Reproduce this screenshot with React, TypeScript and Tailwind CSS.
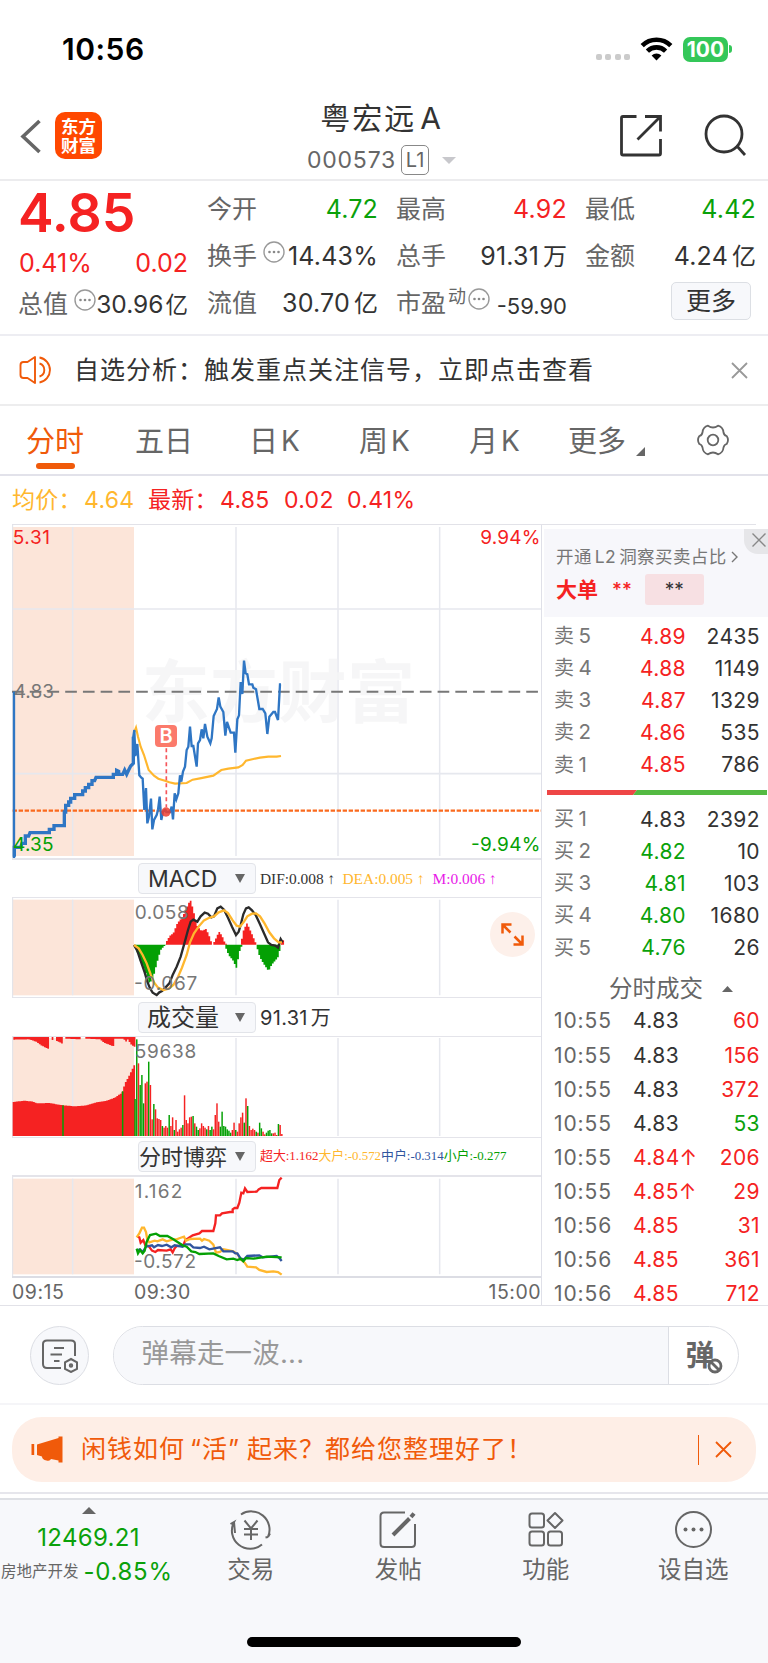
import React from 'react';
import clsx from 'clsx';

type Tone = 'red' | 'green' | 'ink';

const TONES: Record<Tone, string> = {
  red: 'text-[#f52222]',
  green: 'text-[#0aa10a]',
  ink: 'text-[#333]',
};

const RED = '#f52222';
const GREEN = '#04a004';
const AMBER = '#ffb72e';
const GRID = '#e6e8ee';
const CHART_FONT = 'Inter, "Noto Sans CJK SC", sans-serif';

type Point = [number, number];

// Linear interpolation along a list of points sorted by x
function sample(points: Point[], x: number) {
  for (let i = 1; i < points.length; i++) {
    const [x0, y0] = points[i - 1];
    const [x1, y1] = points[i];
    if (x <= x1) return y0 + ((y1 - y0) * (x - x0)) / (x1 - x0);
  }
  return points[points.length - 1][1];
}

function barsPath(points: Point[], base: number, step = 5.1) {
  const from = points[0][0];
  const to = points[points.length - 1][0];
  let d = '';
  for (let x = from; x < to; x += step) {
    const y = sample(points, x + step / 2).toFixed(1);
    d += `M${x.toFixed(1)} ${base}V${y}H${(x + step).toFixed(1)}V${base}Z`;
  }
  return d;
}

const AUCTION_LINE =
  'M43 1040V1012H62L66 1000H76V978H86L90 968H148V958H162V947H193V906H197V886H206V876H212V865H224V854H248V843H256V833H266V823H276V812H284L288 802H340V793H350V781L356 784V793H368L374 780L380 793L386 780L392 768L400 760V680';

const PRICE_LINE =
  'M400 760V680L403 660L406 738L412 702L418 796L424 803L428 806L433 900L438 834L442 940L447 920L453 866L457 958L462 930L470 915L474 900L479 860L484 930L489 905L495 900L499 906H510L515 890L519 928L524 850L529 868L535 850L540 796L544 815L549 785L555 770L560 720L565 710L570 650L575 708H580L590 770L594 700L600 690L605 658L610 685L615 642L622 680L631 700L635 685L641 618L651 597L656 562L661 590L670 606L676 677L681 636L692 668H702L706 728L712 628L717 616L722 516L727 552L732 452L737 490L742 493L747 523H757L760 533L768 538L778 597H788L796 610L802 672L808 620L820 606H825L834 630L840 523H843';

const AVG_LINE =
  'M402 668L408 653L414 680L422 710L432 735L446 780L462 797L475 806L495 812L508 817L525 821L560 819L578 809L600 805L640 797L664 780L685 776L715 772L728 765L738 752L760 747L780 743L805 740L830 740L843 738';

const MACD_BARS: { color: string; points: Point[] }[] = [
  { color: GREEN, points: [[404, 272], [415, 300], [425, 325], [436, 350], [446, 383], [455, 378], [464, 352], [472, 320], [482, 285], [496, 270]] },
  { color: RED, points: [[498, 262], [510, 242], [520, 235], [532, 205], [548, 185], [560, 158], [571, 134], [580, 165], [590, 210], [604, 228], [618, 222], [626, 238], [635, 264]] },
  { color: RED, points: [[640, 266], [648, 250], [657, 230], [666, 242], [676, 266]] },
  { color: GREEN, points: [[676, 275], [686, 300], [700, 318], [710, 340], [714, 314], [722, 275]] },
  { color: RED, points: [[723, 264], [731, 225], [741, 205], [748, 220], [758, 242], [768, 266]] },
  { color: GREEN, points: [[770, 274], [779, 305], [790, 325], [806, 348], [816, 328], [830, 312], [838, 300], [840, 272]] },
  { color: RED, points: [[842, 262], [849, 256]] },
];

const AUCTION_VOLUME: Point[] = [
  [38, 66], [75, 62], [100, 65], [110, 70], [150, 69], [180, 75], [225, 79], [260, 76],
  [290, 67], [320, 62], [345, 53], [366, 38], [375, 10], [385, -8], [395, -28], [402, -44],
];

// Unmatched volume that hangs from the top edge before the open
const UNMATCHED: Point[][] = [
  [[40, -121], [85, -122], [95, -120], [110, -114], [125, -103], [143, -94]],
  [[155, -120], [160, -120]],
  [[168, -118], [178, -114], [188, -108]],
  [[196, -124], [238, -122]],
  [[256, -124], [300, -122], [312, -112], [338, -102]],
  [[340, -124], [370, -124], [378, -115], [384, -122], [392, -108], [402, -100]],
];

// g / r = falling / rising minute, followed by the y of the bar's top
const MINUTE_VOLUME =
  'g57 g-122 r-50 g15 g-15 g70 r10 r5 g-55 r15 r118 g72 r88 r115 r117 r120 g138 r143 r138 r143 g105 r138 r112 g150 r120 r155 r148 r143 g135 r46 r120 r130 r112 r110 g108 r130 g140 g150 r145 r130 r138 r143 g148 r138 g150 g140 r148 r105 r70 r125 g140 g95 g138 g140 g148 g152 g158 r150 r128 g150 r155 r130 r112 r98 g128 r55 g78 r138 r150 r146 r150 g155 r158 g128 g145 r155 r163 g158 g152 g150 g160 r160 r158 r165 g132 r135 r162'
    .split(' ')
    .map((s) => ({ color: s[0] === 'g' ? GREEN : RED, top: Number(s.slice(1)) }));

const SELLS: [string, string, string][] = [
  ['卖5', '4.89', '2435'],
  ['卖4', '4.88', '1149'],
  ['卖3', '4.87', '1329'],
  ['卖2', '4.86', '535'],
  ['卖1', '4.85', '786'],
];

const BUYS: [string, string, string][] = [
  ['买1', '4.83', '2392'],
  ['买2', '4.82', '10'],
  ['买3', '4.81', '103'],
  ['买4', '4.80', '1680'],
  ['买5', '4.76', '26'],
];

const DEALS: [string, string, string, Tone, Tone][] = [
  ['10:55', '4.83', '60', 'ink', 'red'],
  ['10:55', '4.83', '156', 'ink', 'red'],
  ['10:55', '4.83', '372', 'ink', 'red'],
  ['10:55', '4.83', '53', 'ink', 'green'],
  ['10:55', '4.84↑', '206', 'red', 'red'],
  ['10:55', '4.85↑', '29', 'red', 'red'],
  ['10:56', '4.85', '31', 'red', 'red'],
  ['10:56', '4.85', '361', 'red', 'red'],
  ['10:56', '4.85', '712', 'red', 'red'],
];

function StatusBar() {
  return (
    <div className="flex h-[98px] items-center pl-[62px] pr-[36px]">
      <span className="text-[30px] font-semibold leading-none tracking-[0.5px] text-black">10:56</span>
      <div className="ml-auto flex items-center">
        <div className="mt-[16px] flex gap-[3.3px]">
          {[0, 1, 2, 3].map((i) => (
            <span key={i} className="size-[6px] rounded-[2px] bg-[#cbcbcb]" />
          ))}
        </div>
        <svg className="ml-[10px] h-[24px] w-[33px]" viewBox="0 0 33 24">
          <g fill="none" stroke="#000" strokeWidth="4.6">
            <path d="M2.2 8.6a20.5 20.5 0 0 1 28.6 0" />
            <path d="M7.4 14.1a13 13 0 0 1 18.2 0" />
          </g>
          <path d="M11.6 18.6a7 7 0 0 1 9.8 0L16.500 23.600Z" />
        </svg>
        <div className="ml-[10px] flex h-[25px] w-[45px] items-center justify-center rounded-[7px] bg-[#34c759] text-[21px] font-bold leading-none text-white">
          100
        </div>
        <span className="ml-[1px] h-[8px] w-[3px] rounded-r-full bg-[#34c759]" />
      </div>
    </div>
  );
}

function Header() {
  return (
    <div className="flex h-[83px] border-b-2 border-[#ececee]">
      <div className="flex w-[300px] pl-[20px] pt-[14px]">
        <svg className="mt-[7px] h-[35px] w-[22px]" viewBox="0 0 22 35" fill="none" stroke="#666" strokeWidth="3.6">
          <path d="M19.500 2L3 17.500L19.500 33" />
        </svg>
        <div className="ml-[13px] flex size-[47px] flex-col items-center justify-center rounded-[10px] bg-[#ff4800] text-[17.500px] font-bold leading-[19px] text-white">
          <span>东方</span>
          <span>财富</span>
        </div>
      </div>
      <div className="flex w-[168px] flex-col items-center pr-[5px]">
        <div className="mt-[3px] whitespace-nowrap text-[30px] leading-[34px] tracking-[2px] text-[#333]">
          粤宏远<span className="ml-[4px]">A</span>
        </div>
        <div className="mt-[10px] flex items-center text-[#666]">
          <span className="mt-[1px] text-[23px] leading-none tracking-[0.8px]">000573</span>
          <span className="ml-[5px] flex h-[30px] w-[28px] items-center justify-center rounded-[5px] border border-[#888] text-[20px] leading-none">
            L1
          </span>
          <svg className="ml-[13px] h-[7px] w-[14px]" viewBox="0 0 14 7" fill="#c8c8cc">
            <path d="M0 0H14L7 7Z" />
          </svg>
        </div>
      </div>
      <svg className="ml-[151px] mt-[16px] h-[43px] w-[43px]" viewBox="0 0 43 43" fill="none" stroke="#333" strokeWidth="2.8">
        <path d="M17.500 2.500H4Q2.500 2.500 2.500 4V39.500Q2.500 41 4 41H40Q41.500 41 41.500 39.500V25" />
        <path d="M26 2.500H41.500V17.500M41.500 2.500L18.500 25.500" />
      </svg>
      <svg className="ml-[42px] mt-[16px] h-[43px] w-[43px]" viewBox="0 0 43 43" fill="none" stroke="#333" strokeWidth="2.8">
        <circle cx="20" cy="20" r="18" />
        <path d="M32.500 31.500L41 41" />
      </svg>
    </div>
  );
}

function Hint({ className }: { className?: string }) {
  return (
    <svg className={clsx('h-[22px] w-[22px] shrink-0', className)} viewBox="0 0 22 22">
      <circle cx="11" cy="11" r="10" fill="none" stroke="#999" strokeWidth="1.400" />
      <g fill="#888">
        <circle cx="6.500" cy="11" r="1.300" />
        <circle cx="11" cy="11" r="1.300" />
        <circle cx="15.500" cy="11" r="1.300" />
      </g>
    </svg>
  );
}

interface QuoteCellProps {
  label: string;
  value: string;
  unit?: string;
  tone?: Tone;
  hint?: boolean;
}

function QuoteCell({ label, value, unit, tone = 'ink', hint }: QuoteCellProps) {
  // A hint next to a value with a unit leaves less room for both
  const tight = hint && unit;
  return (
    <div className="-ml-[1px] flex h-[47px] items-center">
      <span className="whitespace-nowrap text-[25px] leading-none text-[#666]">{label}</span>
      {hint && <Hint className="-mt-[9px] ml-[6px]" />}
      <span
        className={clsx(
          'ml-auto whitespace-nowrap leading-none',
          tight ? 'text-[24.500px]' : 'text-[25px] tracking-[0.2px]',
          TONES[tone],
        )}
      >
        {value}
        {unit && <span className={clsx('tracking-normal', tight ? 'ml-[2px] text-[22.500px]' : 'ml-[4px] text-[24px]')}>{unit}</span>}
      </span>
    </div>
  );
}

function Quote() {
  return (
    <div className="grid h-[155px] grid-cols-[169px_170px_169px_169px] gap-x-[20px] border-b-2 border-[#ededf2] pl-[19px]">
      <div className="pt-[5px]">
        <div className="-ml-[1px] flex h-[53px] items-center text-[53.500px] font-semibold leading-none text-[#f52222]">4.85</div>
        <div className="flex h-[48px] items-center justify-between text-[25px] leading-none text-[#f52222]">
          <span>0.41%</span>
          <span>0.02</span>
        </div>
        <div className="-mt-[6px]">
          <QuoteCell label="总值" value="30.96" unit="亿" hint />
        </div>
      </div>
      <div className="pt-[5px]">
        <QuoteCell label="今开" value="4.72" tone="green" />
        <QuoteCell label="换手" value="14.43%" hint />
        <QuoteCell label="流值" value="30.70" unit="亿" />
      </div>
      <div className="-ml-[1px] pt-[5px]">
        <QuoteCell label="最高" value="4.92" tone="red" />
        <QuoteCell label="总手" value="91.31" unit="万" />
        <div className="-ml-[1px] flex h-[47px] items-center leading-none text-[#666]">
          <span className="whitespace-nowrap text-[25px] leading-none">市盈</span>
          <span className="-mt-[14px] ml-[2px] text-[18px]">动</span>
          <Hint className="-mt-[9px] ml-[2px]" />
          <span className="ml-auto mt-[5px] text-[22px] text-[#333]">-59.90</span>
        </div>
      </div>
      <div className="-ml-[1px] pt-[5px]">
        <QuoteCell label="最低" value="4.42" tone="green" />
        <QuoteCell label="金额" value="4.24" unit="亿" />
        <button className="ml-[85px] mt-[2px] flex h-[38px] w-[80px] items-center justify-center rounded-[5px] border border-[#dcdfe4] bg-[#f7f8fb] text-[25px] leading-none text-[#333]">
          更多
        </button>
      </div>
    </div>
  );
}

function Notice() {
  return (
    <div className="flex h-[70px] items-center border-b-2 border-[#ededee] pl-[19px] pr-[20px]">
      <svg className="h-[30px] w-[34px]" viewBox="0 0 34 30" fill="none" stroke="#f05a0a" strokeWidth="1.900">
        <path d="M16 2V28L8.500 23H4.500Q1.500 23 1.500 20V10Q1.500 7 4.500 7H8.500Z" strokeLinejoin="round" />
        <path d="M20.500 2.500A12.700 12.700 0 0 1 20.500 27.500M20.500 8.500A6.800 6.800 0 0 1 20.500 21.500" />
      </svg>
      <span className="ml-[21px] whitespace-nowrap text-[25px] leading-none tracking-[1px] text-[#333]">
        自选分析：触发重点关注信号，立即点击查看
      </span>
      <svg className="ml-auto h-[17px] w-[17px]" viewBox="0 0 17 17" stroke="#999" strokeWidth="1.800">
        <path d="M1 1L16 16M16 1L1 16" />
      </svg>
    </div>
  );
}

function Tabs() {
  return (
    <div className="flex h-[70px] border-b-2 border-[#e2e2ea] pt-[2px] text-[29px] leading-none text-[#666]">
      <div className="ml-[26px] flex w-[58px] flex-col items-center">
        <span className="flex h-[66px] shrink-0 items-center whitespace-nowrap text-[#f05a0a]">分时</span>
        <span className="-mt-[11px] h-[6px] w-[39px] rounded-[3px] bg-[#f05a0a]" />
      </div>
      <span className="ml-[51px] flex h-[66px] w-[58px] items-center whitespace-nowrap">五日</span>
      {['日', '周', '月'].map((period, i) => (
        <span
          key={period}
          className={clsx('flex h-[66px] w-[52px] items-center whitespace-nowrap', i === 0 ? 'ml-[56px]' : 'ml-[58px]')}
        >
          {period}
          <span className="ml-[3px] text-[28px]">K</span>
        </span>
      ))}
      <span className="ml-[47px] flex h-[66px] w-[58px] items-center whitespace-nowrap">更多</span>
      <svg className="ml-[10px] mt-[39px] h-[9px] w-[9px]" viewBox="0 0 9 9" fill="#666">
        <path d="M9 0V9H0Z" />
      </svg>
      <svg className="ml-[52px] mt-[16px] h-[32px] w-[32px]" viewBox="0 0 32 32" fill="none" stroke="#666" strokeWidth="1.800">
        <path
          strokeLinejoin="round"
          d="M11 1.700Q13.500 3.500 16 3.500T21 1.700Q26 3 26.500 8.500Q27 11.300 29.700 12Q32.300 16 29.700 20Q27 20.700 26.500 23.500Q26 29 21 30.300Q18.500 28.500 16 28.500T11 30.300Q6 29 5.500 23.500Q5 20.700 2.300 20Q-0.300 16 2.300 12Q5 11.300 5.500 8.500Q6 3 11 1.700Z"
        />
        <circle cx="16" cy="16" r="5.300" />
      </svg>
    </div>
  );
}

function PriceLine() {
  return (
    <div className="flex h-[48px] items-center whitespace-nowrap pl-[12px] text-[23px] leading-none tracking-[0.3px] text-[#f52222]">
      <span className="w-[72px] text-[#ffb72e]">均价：</span>
      <span className="w-[64px] text-[#ffb72e]">4.64</span>
      <span className="w-[72px]">最新：</span>
      <span className="w-[64px]">4.85</span>
      <span className="w-[63px]">0.02</span>
      <span>0.41%</span>
    </div>
  );
}

interface PaneProps {
  top: number;
  height: number;
  inset?: number;
  children: React.ReactNode;
}

// One chart pane. Its units are thirds of a pixel.
function Pane({ top, height, inset = 6, children }: PaneProps) {
  const y0 = top + inset;
  const y1 = top + height - inset;
  return (
    <svg
      className="block w-[529px]"
      style={{ height: height / 3 }}
      viewBox={`36 ${top} 1587 ${height}`}
      fontFamily={CHART_FONT}
      fontSize="57"
    >
      <rect x="38" y={y0} width="364" height={y1 - y0} fill="#fce5d9" />
      <path d={`M218 ${y0}V${y1}M708 ${y0}V${y1}M1014 ${y0}V${y1}M1319 ${y0}V${y1}`} stroke={GRID} strokeWidth="4.500" />
      <path d={`M38 ${top}V${top + height}`} stroke="#dfe1e8" strokeWidth="3" />
      {children}
    </svg>
  );
}

function MainPane() {
  return (
    <Pane top={45} height={999}>
      <text x="425" y="622" fontSize="204" fontWeight="700" fill="#f5f5f6" textLength="820" fillOpacity="0.85">
        东方财富
      </text>
      <path d="M38 297H1623M38 791H1623" stroke={GRID} strokeWidth="5" />
      <path d="M36 545H1623" stroke="#777" strokeWidth="6" strokeDasharray="35 18.200" />
      <path d="M38 902H1623" stroke="#fa6a1e" strokeWidth="7" strokeDasharray="13 5" />
      <path d={AVG_LINE} fill="none" stroke={AMBER} strokeWidth="6.500" />
      <path d="M42 545V1044" stroke="#2f76c4" strokeWidth="7" />
      <path d={AUCTION_LINE} fill="none" stroke="#2f76c4" strokeWidth="10" />
      <path d={PRICE_LINE} fill="none" stroke="#2f76c4" strokeWidth="7" />
      <path d="M499 715V892" stroke="#f5555a" strokeWidth="5" strokeDasharray="12 9" />
      <circle cx="498" cy="906" r="14" fill="#ee4030" fillOpacity="0.85" />
      <rect x="465" y="645" width="66" height="66" rx="12" fill="#fb7a6b" />
      <text x="498" y="700" fontSize="60" fontWeight="600" fill="#fff" textAnchor="middle">B</text>
      <text x="38" y="101" fill={RED} textLength="112">5.31</text>
      <text x="1441" y="101" fill={RED} textLength="180">9.94%</text>
      <text x="41" y="564" fill="#777" textLength="121">4.83</text>
      <text x="39" y="1024" fill={GREEN} textLength="122">4.35</text>
      <text x="1413" y="1024" fill={GREEN} textLength="208">-9.94%</text>
    </Pane>
  );
}

function MacdPane() {
  return (
    <Pane top={129} height={297} inset={5}>
      {MACD_BARS.map((group, i) => (
        <path key={i} d={barsPath(group.points, 269)} fill={group.color} />
      ))}
      <path
        fill="none"
        stroke="#2b2b2b"
        strokeWidth="7"
        d="M402 270L412 288L422 318L434 352L442 380L450 400L458 413L470 420L478 412L486 408L494 400L508 385L518 360L530 335L542 305L554 262L564 225L572 200L580 194L592 200L602 184L614 173L624 176L634 187L642 184L652 160L662 155L672 164L684 188L696 215L708 240L716 230L722 210L730 178L738 160L746 157L756 166L768 182L780 208L792 235L804 262L814 270L826 272L834 278L842 252L848 262"
      />
      <path
        fill="none"
        stroke={AMBER}
        strokeWidth="7"
        d="M402 270L416 280L428 300L440 325L452 358L462 382L474 398L490 405L506 401L520 390L534 366L546 338L560 300L570 262L582 235L598 212L612 196L626 189L642 184L656 172L672 166L684 174L698 196L710 212L720 215L732 200L742 184L756 176L768 175L780 184L794 206L808 232L822 250L836 262L846 262"
      />
      <text x="404" y="192" fill="#777" textLength="162">0.058</text>
      <text x="402" y="405" fill="#777" textLength="190">-0.067</text>
    </Pane>
  );
}

function VolumePane() {
  return (
    <Pane top={-129} height={300} inset={3}>
      <path d={barsPath(AUCTION_VOLUME, 168)} fill={RED} />
      <path d="M189 76V168M368 34V168" stroke={GREEN} strokeWidth="4.500" />
      {UNMATCHED.map((points, i) => (
        <path key={i} d={barsPath(points, -129)} fill={RED} />
      ))}
      {MINUTE_VOLUME.map((bar, i) => (
        <rect key={i} x={403 + i * 5.12} y={bar.top} width="4.400" height={168 - bar.top} fill={bar.color} />
      ))}
      <text x="404" y="-67" fill="#777" textLength="185">59638</text>
    </Pane>
  );
}

function GamePane() {
  return (
    <Pane top={291} height={297} inset={5}>
      <g fill="none" strokeWidth="7">
        <path
          stroke={RED}
          d="M412 470L418 472L422 488L430 480L436 496L446 498L456 512L466 516L474 510L500 512L512 508L518 517L524 505L530 498L550 496L556 480L566 474L578 466L598 460L606 453H640L646 430L648 406L660 406L666 400L690 396H698V388L704 384H712L718 368L724 338L730 340L735 325L742 336L770 335L776 328L784 324H832L838 300L845 293"
        />
        <path
          stroke={AMBER}
          d="M410 472L418 460L426 443H432L438 456L442 480L448 487L464 482L472 484L488 478L500 484L520 478H530L540 474L552 470L558 482L570 477L600 476L606 482L612 477L628 482L640 494L648 518L660 516L670 508L680 510L700 514L712 522L722 538L734 548L742 560L768 562L778 570L800 576L820 574L834 576L845 584"
        />
        <path
          stroke="#30559f"
          d="M410 512L420 508L428 516L438 500L456 496L462 502L474 495L486 498L500 494L514 502L524 496L548 500L556 493H570L580 502L600 504L612 500L628 508L660 502L670 514L698 514L706 520L712 520L722 536L732 538L742 528L778 526L788 532L830 528L838 534L845 543"
        />
        <path
          stroke={GREEN}
          d="M410 506L414 520L420 510L428 520L434 512L440 486L450 465L468 461L480 468L502 468L520 478L536 488L548 496L560 500L574 514L586 516L598 522L640 520L656 528L680 538L700 536L712 540L722 536L730 544L738 534L760 536L800 530L845 532"
        />
      </g>
      <text x="404" y="353" fill="#777" textLength="143">1.162</text>
      <text x="402" y="565" fill="#777" textLength="186">-0.572</text>
    </Pane>
  );
}

interface IndicatorBarProps {
  name: string;
  nameClass: string;
  className: string;
  children: React.ReactNode;
}

function IndicatorBar({ name, nameClass, className, children }: IndicatorBarProps) {
  return (
    <div className={clsx('flex items-center border-[#e4e4ea] pl-[126px]', className)}>
      <div className="flex h-[31px] w-[118px] shrink-0 items-center rounded-[4px] border border-[#e2e4e9] bg-[#f7f8fb] pr-[10px] leading-none text-[#333]">
        <span className={clsx('whitespace-nowrap', nameClass)}>{name}</span>
        <svg className="ml-auto h-[9px] w-[10px]" viewBox="0 0 10 9" fill="#666">
          <path d="M0 0H10L5 9Z" />
        </svg>
      </div>
      <div className="ml-[4px] flex whitespace-pre leading-none">{children}</div>
    </div>
  );
}

function Charts() {
  return (
    <div className="relative ml-[12px] w-[530px] shrink-0 border-r border-[#dfe0e8]">
      <MainPane />
      <IndicatorBar name="MACD" nameClass="pl-[9px] pt-[1px] text-[23px]" className="h-[40px] border-b border-t-2">
        <div className="flex font-['Liberation_Serif',serif] text-[15.400px]">
          <span className="w-[82.500px] text-[#333]">DIF:0.008 ↑</span>
          <span className="w-[90px] text-[#ffb72e]">DEA:0.005 ↑</span>
          <span className="text-[#e81ae8]">M:0.006 ↑</span>
        </div>
      </IndicatorBar>
      <MacdPane />
      <IndicatorBar name="成交量" nameClass="pl-[8px] text-[24px]" className="h-[40px] border-y pt-[1px]">
        <span className="text-[20px] tracking-[0.3px] text-[#333]">
          91.31<span className="ml-[3px] text-[20px]">万</span>
        </span>
      </IndicatorBar>
      <VolumePane />
      <IndicatorBar name="分时博弈" nameClass="text-[22px]" className="h-[40px] border-b-2 border-t">
        <div className="flex font-['Liberation_Serif','Noto_Sans_CJK_SC',serif] text-[12.900px]">
          <span className="text-[#f52222]">超大:1.162</span>
          <span className="text-[#ffb72e]">大户:-0.572</span>
          <span className="text-[#30559f]">中户:-0.314</span>
          <span className="text-[#04a004]">小户:-0.277</span>
        </div>
      </IndicatorBar>
      <GamePane />
      <div className="flex h-[29px] items-center border-t-2 border-[#dcdde4] pt-[3px] text-[19.500px] leading-none tracking-[0.5px] text-[#666]">
        <span className="w-[122px]">09:15</span>
        <span>09:30</span>
        <span className="ml-auto">15:00</span>
      </div>
      <button className="absolute left-[478px] top-[387px] flex size-[45px] items-center justify-center rounded-full bg-[#fdf0ea]">
        <svg className="h-[23px] w-[23px]" viewBox="0 0 23 23" fill="none" stroke="#f05a0a" strokeWidth="2.500">
          <path d="M1.500 10.500V1.500H10.500M1.500 1.500L9.500 9.500M21.500 12.500V21.500H12.500M21.500 21.500L13.500 13.500" />
        </svg>
      </button>
    </div>
  );
}

function OrderRow({ row, tone }: { row: [string, string, string]; tone: Tone }) {
  return (
    <div className="flex h-[32.200px] items-center text-[21px] leading-none tracking-[0.4px]">
      <span className="-ml-[1px] w-[60px] whitespace-nowrap text-[20px] text-[#777]">
        {row[0][0]}
        <span className="ml-[4px] text-[20.500px]">{row[0][1]}</span>
      </span>
      <span className={clsx('w-[72px] text-right', TONES[tone])}>{row[1]}</span>
      <span className="ml-auto text-[#333]">{row[2]}</span>
    </div>
  );
}

function OrderBook() {
  return (
    <div className="w-[226px] shrink-0 pl-[2px]">
      <div className="relative mt-[4px] h-[88px] bg-[#f7f7fb] pl-[12px] pt-[17px]">
        <div className="flex items-center whitespace-nowrap text-[17.500px] leading-[22px] tracking-[0.4px] text-[#777]">
          开通<span className="mx-[3px]">L2</span>洞察买卖占比
          <svg className="ml-[4px] h-[12px] w-[7px]" viewBox="0 0 7 12" fill="none" stroke="#777" strokeWidth="1.400">
            <path d="M1 1L6 6L1 11" />
          </svg>
        </div>
        <div className="mt-[6px] flex h-[31px] items-center">
          <span className="text-[21px] font-bold leading-none text-[#f52222]">大单</span>
          <span className="ml-[14px] text-[19px] font-medium leading-none text-[#f52222]">**</span>
          <span className="ml-[13px] flex h-[31px] w-[59px] items-center justify-center rounded-[3px] bg-[#f7e0e3] text-[19px] leading-none text-[#333]">
            **
          </span>
        </div>
        <div className="absolute right-0 top-0 flex h-[25px] w-[24px] items-center justify-center rounded-bl-[14px] bg-[#e6e6e9]">
          <svg className="ml-[5px] mt-[-3px] h-[14px] w-[14px]" viewBox="0 0 14 14" stroke="#888" strokeWidth="1.400">
            <path d="M0.500 0.500L13.500 13.500M13.500 0.500L0.500 13.500" />
          </svg>
        </div>
      </div>
      <div className="mt-[3px] pl-[11px] pr-[8px]">
        {SELLS.map((row) => (
          <OrderRow key={row[0]} row={row} tone="red" />
        ))}
      </div>
      <svg className="ml-[3px] mt-[9px] block h-[5px] w-[220px]" viewBox="0 0 220 5">
        <path d="M0 0H90L86 5H0Z" fill="#ee4646" />
        <path d="M90 0H220V5H86Z" fill="#54ba42" />
      </svg>
      <div className="mt-[8px] pl-[11px] pr-[8px]">
        {BUYS.map((row, i) => (
          <OrderRow key={row[0]} row={row} tone={i === 0 ? 'ink' : 'green'} />
        ))}
      </div>
      <div className="mt-[10px] flex h-[30px] items-center pl-[65px] text-[23.500px] leading-none text-[#666]">
        分时成交
        <svg className="ml-[19px] h-[6px] w-[11px]" viewBox="0 0 11 6" fill="#666">
          <path d="M5.500 0L11 6H0Z" />
        </svg>
      </div>
      <div className="pl-[10px] pr-[8px]">
        {DEALS.map(([time, price, volume, priceTone, volumeTone], i) => (
          <div key={i} className="flex h-[34.100px] items-center text-[21px] leading-none tracking-[0.4px]">
            <span className="w-[79px] tracking-[0.900px] text-[#666]">{time}</span>
            <span className={TONES[priceTone]}>{price}</span>
            <span className={clsx('ml-auto', TONES[volumeTone])}>{volume}</span>
          </div>
        ))}
      </div>
    </div>
  );
}

function CommentBar() {
  return (
    <div className="flex h-[99px] items-start border-b-2 border-[#f5f5f8] pl-[30px] pt-[20px]">
      <button className="flex size-[59px] items-center justify-center rounded-full border border-[#dcdee4] bg-[#f7f8fb]">
        <svg className="h-[34px] w-[38px]" viewBox="0 0 38 34" fill="none" stroke="#666" strokeWidth="2">
          <path d="M20 29H6Q2 29 2 25V5Q2 1.500 6 1.500H30Q34 1.500 34 5V17" />
          <path d="M13 9H23M9.500 15.500H21M13 22H18.500" />
          <path d="M30 20L36 23.300V30L30 33L24 30V23.300Z" />
          <circle cx="30" cy="26.500" r="1.200" />
        </svg>
      </button>
      <div className="ml-[23.500px] flex h-[59px] w-[626px] overflow-hidden rounded-full border border-[#dcdee4]">
        <div className="flex w-[555px] items-center border-r border-[#dcdee4] bg-[#f7f8fb] pb-[4px] pl-[28px] text-[27.500px] leading-none tracking-[0.2px] text-[#999]">
          弹幕走一波...
        </div>
        <div className="relative flex items-center pb-[1px] pl-[17px] text-[29px] font-bold leading-none text-[#666]">
          弹
          <svg className="absolute left-[38px] top-[31px] h-[16px] w-[16px]" viewBox="0 0 16 16" fill="#fff" stroke="#666" strokeWidth="2.800">
            <circle cx="8" cy="8" r="6" />
            <path d="M4 4L12 12" />
          </svg>
        </div>
      </div>
    </div>
  );
}

function Banner() {
  return (
    <div className="h-[89px] border-b-2 border-[#e6e6ec] px-[12px] pt-[12px]">
      <div className="flex h-[65px] items-center rounded-[30px] bg-[#feeee6] pl-[19px] pr-[24px]">
        <svg className="h-[27px] w-[32px]" viewBox="0 0 32 27" fill="#f05a0a">
          <path d="M0.500 8H3.200V19H0.500ZM6 8.500L27.500 2V0.500H31.500V26.500H27.500V24.500L20 23Q19 25.500 15.500 24.500Q11 23.500 11 20.500L6 19Z" />
        </svg>
        <span className="ml-[18px] whitespace-nowrap text-[25px] leading-none tracking-[1px] text-[#f05a0a]">
          闲钱如何<span className="ml-[5px]">“活”</span>
          <span className="ml-[7px]">起来？都给您整理好了！</span>
        </span>
        <span className="ml-auto h-[30px] w-px bg-[#f05a0a]" />
        <svg className="ml-[16px] h-[17px] w-[17px]" viewBox="0 0 17 17" stroke="#f05a0a" strokeWidth="1.800">
          <path d="M1 1L16 16M16 1L1 16" />
        </svg>
      </div>
    </div>
  );
}

function NavItem({ label, children }: { label: string; children: React.ReactNode }) {
  return (
    <div className="flex w-[147.500px] flex-col items-center">
      <svg className="mt-[9px] h-[42px] w-[44px]" viewBox="0 0 44 42" fill="none" stroke="#666" strokeWidth="2">
        {children}
      </svg>
      <span className="mt-[7px] text-[23.500px] leading-none text-[#666]">{label}</span>
    </div>
  );
}

function BottomNav() {
  return (
    <div className="mt-[4px] flex h-[165px] flex-col border-t-2 border-[#dee0e5] bg-[#f7f8fb]">
      <div className="flex">
        <div className="flex w-[177px] flex-col items-center text-[#0aa10a]">
          <svg className="mt-[7px] h-[7px] w-[14px]" viewBox="0 0 14 7" fill="#666">
            <path d="M7 0L14 7H0Z" />
          </svg>
          <span className="mt-[12px] text-[24px] leading-none tracking-[0.3px]">12469.21</span>
          <div className="mt-[10px] flex w-full items-center whitespace-nowrap pl-[1px] leading-none">
            <span className="text-[15.500px] text-[#666]">房地产开发</span>
            <span className="ml-[5px] text-[24px] tracking-[0.700px]">-0.85%</span>
          </div>
        </div>
        <NavItem label="交易">
          <path d="M12 5.500A18.300 18.300 0 0 1 39 28L41 24.500M39 28L36.500 28.500" />
          <path d="M33 35.500A18.300 18.300 0 0 1 5 13L1.500 15M5 13L6 24" />
          <path d="M15.500 11.500L22 19.500L28.500 11.500M22 19.500V31M15 20H29M15 25.500H29" />
        </NavItem>
        <NavItem label="发帖">
          <path d="M29 3.500H8Q4.500 3.500 4.500 7V34.500Q4.500 38 8 38H35.500Q39 38 39 34.500V15" />
          <path d="M17 26L33.500 9.500" strokeWidth="4" />
          <path d="M35 8L38 4.500" strokeWidth="4" />
        </NavItem>
        <NavItem label="功能">
          <rect x="5.500" y="4.500" width="14.500" height="14" rx="2.500" />
          <rect x="5.500" y="22.500" width="14.500" height="14" rx="2.500" />
          <rect x="24" y="22.500" width="14" height="14" rx="2.500" />
          <path d="M31 4L38.500 11.500L31 19L23.500 11.500Z" strokeLinejoin="round" />
        </NavItem>
        <NavItem label="设自选">
          <circle cx="22.500" cy="20.500" r="17.500" />
          <g fill="#666" stroke="none">
            <circle cx="14.500" cy="20.500" r="2" />
            <circle cx="22.500" cy="20.500" r="2" />
            <circle cx="30.500" cy="20.500" r="2" />
          </g>
        </NavItem>
      </div>
      <div className="mx-auto mb-[16px] mt-auto h-[10px] w-[274px] rounded-full bg-black" />
    </div>
  );
}

export default function App() {
  return (
    <div className="h-[1663px] w-[768px] overflow-hidden bg-white font-['Inter','Noto_Sans_CJK_SC',sans-serif]">
      <StatusBar />
      <Header />
      <Quote />
      <Notice />
      <Tabs />
      <PriceLine />
      <div className="ml-[12px] mr-[12px] h-px bg-[#e2e2e8]" />
      <div className="flex h-[781px] overflow-hidden border-b border-[#e2e2e8]">
        <Charts />
        <OrderBook />
      </div>
      <CommentBar />
      <Banner />
      <BottomNav />
    </div>
  );
}
